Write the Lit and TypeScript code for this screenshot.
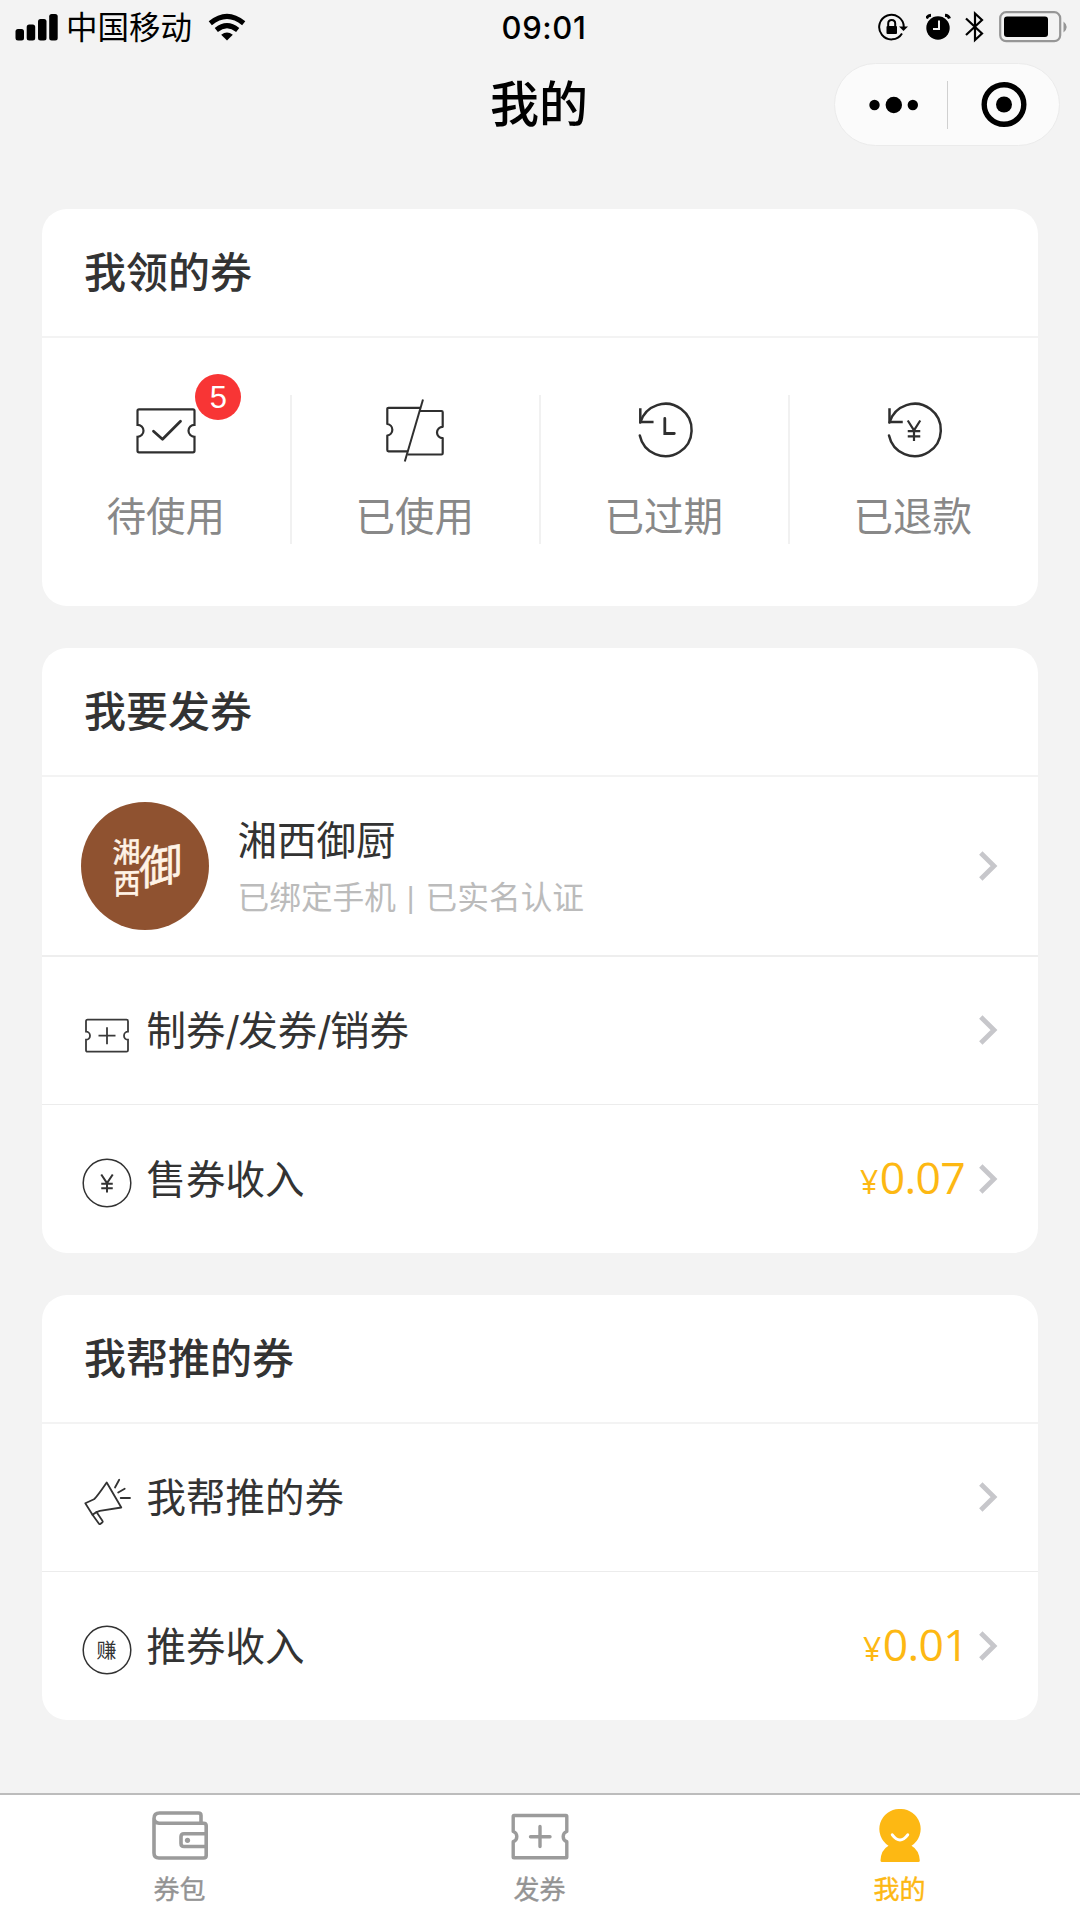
import { LitElement, html, svg, css, nothing, TemplateResult } from "lit";
import { customElement, property } from "lit/decorators.js";

const ticketOutline = (w: number, h: number, n: number) => {
  const m = h / 2;
  return `M3 1.5H${w - 3}Q${w - 1.5} 1.5 ${w - 1.5} 3V${m - n}A${n} ${n} 0 0 0 ${w - 1.5} ${m + n}V${h - 3}Q${w - 1.5} ${h - 1.5} ${w - 3} ${h - 1.5}H3Q1.5 ${h - 1.5} 1.5 ${h - 3}V${m + n}A${n} ${n} 0 0 0 1.5 ${m - n}V3Q1.5 1.5 3 1.5Z`;
};

const yen = (cx: number, top: number, w: number, h: number) =>
  svg`<path d="M${cx - w / 2} ${top}L${cx} ${top + h * 0.48}L${cx + w / 2} ${top}M${cx} ${top + h * 0.48}V${top + h}M${cx - w / 2} ${top + h * 0.52}H${cx + w / 2}M${cx - w / 2} ${top + h * 0.77}H${cx + w / 2}"/>`;

const icons: Record<string, TemplateResult> = {
  unused: html`<svg width="60" height="66" viewBox="0 0 60 66">
    <g transform="translate(0 10.8)" fill="none" stroke="#2f2f2f" stroke-width="2.2">
      <path d=${ticketOutline(60, 46, 6)} />
      <path d="M17.5 23.5L26.5 31.5L44.5 13.5" stroke-width="2.8" stroke-linecap="round" stroke-linejoin="round" />
    </g>
  </svg>`,
  used: html`<svg width="60" height="66" viewBox="0 0 60 66" fill="none" stroke="#2f2f2f" stroke-width="2.2" stroke-linejoin="round">
    <path d="M35.5 10.8H3.5Q2.3 10.8 2.3 12V27A5.8 5.8 0 0 1 2.3 38.5V53Q2.3 54.3 3.5 54.3H22.5" />
    <path d="M35 14H56.5Q57.7 14 57.7 15.2V29.8A5.7 5.7 0 0 0 57.7 41.2V56.3Q57.7 57.5 56.5 57.5H22.5" />
    <path d="M38 2.5L19.8 64.5" stroke-width="2" />
  </svg>`,
  expired: html`<svg width="60" height="66" viewBox="0 0 60 66" fill="none" stroke="#2f2f2f" stroke-width="2.5" stroke-linecap="round">
    <path d="M6.3 25.5A26.2 26.2 0 1 1 5.8 38.5" />
    <path d="M6.3 12.5V25H18.3" stroke-linecap="square" />
    <path d="M30.8 21.5V36.5H40.3" stroke-width="2.8" />
  </svg>`,
  refunded: html`<svg width="60" height="66" viewBox="0 0 60 66" fill="none" stroke="#2f2f2f" stroke-width="2.5" stroke-linecap="round">
    <path d="M6.5 25.5A26.2 26.2 0 1 1 6 38.5" />
    <path d="M6.5 12.5V25H18.5" stroke-linecap="square" />
    <g stroke-width="2.2" stroke-linecap="butt">${yen(31, 23.5, 12.5, 20.5)}</g>
  </svg>`,
  ticket: html`<svg width="50" height="50" viewBox="0 0 50 50" fill="none" stroke="#3a3a3a" stroke-width="1.8">
    <g transform="translate(2.5 8.2)"><path d=${ticketOutline(45, 35, 4)} /><path d="M22.5 9V26M14 17.5H31" /></g>
  </svg>`,
  yen: html`<svg width="50" height="50" viewBox="0 0 50 50" fill="none" stroke="#333" stroke-width="1.5">
    <circle cx="25" cy="25" r="23.8" />
    <g stroke-width="2">${yen(25, 16.5, 11.5, 18)}</g>
  </svg>`,
  horn: html`<svg width="50" height="50" viewBox="0 0 50 50" fill="none" stroke="#333" stroke-width="1.8" stroke-linejoin="round" stroke-linecap="round">
    <path d="M24.7 5.5L39.3 30.5L17.8 33.8Q14 34.8 10.5 37.8L3.3 26.3L12 22.3Q14.8 20 24.7 5.5Z" />
    <path d="M10.5 37.8L16.8 46.5Q17.5 47.5 18.6 46.7L20.2 45.5Q21.2 44.7 20.4 43.7L14.5 35" />
    <path d="M33 10.5L37.2 2.7M36.2 15.5L42.7 11.7M38.7 21H48" />
  </svg>`,
  earn: html`<svg width="50" height="50" viewBox="0 0 50 50">
    <circle cx="25" cy="25" r="23.8" fill="none" stroke="#333" stroke-width="1.5" />
    <text class="glyph" x="24.5" y="32.7" font-size="20" text-anchor="middle" fill="#333">赚</text>
  </svg>`,
  wallet: html`<svg width="60" height="56" viewBox="0 0 60 56" fill="none" stroke="#9b9b9b" stroke-width="3.6" stroke-linejoin="round">
    <path d="M51 15V6.5Q51 4 48.5 4H9.5Q4 4 4 9.5V44Q4 49 9 49H53.5Q56.2 49 56.2 46.5V16.7Q56.2 14.2 53.5 14.2H9Q4.5 14 4 9.5" />
    <path d="M56 24.7H34Q31 24.7 31 27.7V34.5Q31 37.5 34 37.5H56" />
    <circle cx="37.5" cy="31.3" r="2.6" fill="#9b9b9b" stroke="none" />
  </svg>`,
  issue: html`<svg width="60" height="56" viewBox="0 0 60 56" fill="none" stroke="#9b9b9b" stroke-width="3.4" stroke-linejoin="round">
    <path d="M4 6.5H56Q56.8 6.5 56.8 7.5V22.5A5.4 5.4 0 0 0 56.8 32.7V48Q56.8 48.8 56 48.8H4Q3.2 48.8 3.2 48V32.7A5.4 5.4 0 0 0 3.2 22.5V7.5Q3.2 6.5 4 6.5Z" />
    <path d="M30 17.5V37.5M20.5 27.7H40" stroke-linecap="round" />
  </svg>`,
  me: html`<svg width="60" height="56" viewBox="0 0 60 56">
    <path d="M30 0A20 20 0 0 1 41.5 36.8Q49 41 49.8 51.5Q49.8 53 48.3 53H12Q10.5 53 10.5 51.5Q11 41 18.5 36.8A20 20 0 0 1 30 0Z" fill="#fdb813" />
    <path d="M22.3 25.8Q30 36 37.7 25.8" fill="none" stroke="#fff" stroke-width="3" stroke-linecap="round" />
  </svg>`,
};

const base = css`
  * { box-sizing: border-box; }
  svg { display: block; flex: none; }
  .glyph { font-family: "Noto Sans CJK SC", sans-serif; }
`;

@customElement("status-bar")
class StatusBar extends LitElement {
  static styles = [base, css`
    :host { display: grid; grid-template-columns: 1fr auto 1fr; align-items: center; height: 54px; padding: 0 12px 0 15px; color: #000; }
    .left, .right { display: flex; align-items: center; }
    .right { justify-content: flex-end; }
    .carrier { font-size: 31.5px; line-height: 40px; margin: 0 16px 0 8px; padding-top: 1px; }
    .time { font: 500 31px/40px Inter, sans-serif; letter-spacing: 0.6px; margin-left: 5px; padding-top: 1px; }
    .lock { margin-right: 17px; }
    .alarm { margin-right: 13px; }
    .bt { margin-right: 14px; }
  `];
  render() {
    return html`
      <div class="left">
        <svg width="43" height="28" viewBox="0 0 43 28">
          <rect x="0.5" y="16" width="8.5" height="11.5" rx="2.5" /><rect x="11.7" y="11.5" width="8.5" height="16" rx="2.5" />
          <rect x="23" y="6" width="8.5" height="21.5" rx="2.5" /><rect x="34.2" y="1" width="8.5" height="26.5" rx="2.5" />
        </svg>
        <span class="carrier">中国移动</span>
        <svg width="38" height="28" viewBox="0 0 38 28" fill="none" stroke="#000" stroke-width="5">
          <path d="M2.3 10.3Q19 -3.5 35.7 10.3" /><path d="M8.3 17Q19 8.3 29.7 17" />
          <path d="M19 27.5L13.2 21.7Q19 17.3 24.8 21.7Z" fill="#000" stroke="none" />
        </svg>
      </div>
      <div class="time">09:01</div>
      <div class="right">
        <svg class="lock" width="31" height="28" viewBox="0 0 31 28" fill="none" stroke="#000" stroke-width="2">
          <path d="M24 20.5A12.3 12.3 0 1 1 25.8 14" />
          <path d="M21 13.5H30L25.5 18Z" fill="#000" stroke="none" />
          <rect x="8.5" y="13" width="10.5" height="8" rx="1" fill="#000" stroke="none" />
          <path d="M10.2 13.5V10.5Q10.2 7 13.7 7T17.2 10.5V13.5" />
        </svg>
        <svg class="alarm" width="26" height="28" viewBox="0 0 26 28">
          <circle cx="12" cy="15" r="11.7" />
          <path d="M0.5 5.5Q1.5 2.5 5 2.3M23.5 5.5Q22.5 2.5 19 2.3" fill="none" stroke="#000" stroke-width="3" />
          <path d="M13 7.5V16H7" fill="none" stroke="#f3f3f3" stroke-width="2" />
        </svg>
        <svg class="bt" width="20" height="32" viewBox="0 0 20 32" fill="none" stroke="#000" stroke-width="2.2">
          <path d="M1 7.5L17 22.5L10 29V2.5L17 9L1 24" />
        </svg>
        <svg width="69" height="32" viewBox="0 0 69 32">
          <rect x="1.2" y="1.2" width="60" height="29" rx="6" fill="none" stroke="#969696" stroke-width="2.2" />
          <rect x="5" y="5.5" width="44" height="20.5" rx="3" />
          <path d="M64.5 10.5Q67.7 13 67.7 16T64.5 21.5Z" fill="#969696" />
        </svg>
      </div>`;
  }
}

@customElement("nav-header")
class NavHeader extends LitElement {
  static styles = [base, css`
    :host { display: grid; grid-template-columns: 1fr auto 1fr; align-items: center; height: 101px; padding: 0 20px 0 0; }
    .title { grid-column: 2; font-size: 49px; line-height: 60px; font-weight: 500; color: #000; margin-left: 18px; }
    .capsule { justify-self: end; display: flex; align-items: center; width: 226px; height: 83px; border-radius: 42px; background: #fbfbfb; border: 1px solid #ebebeb; }
    .half { flex: 1; display: flex; justify-content: center; align-items: center; }
    .line { width: 1px; height: 48px; background: #d0d0d0; }
  `];
  render() {
    return html`
      <div class="title">我的</div>
      <div class="capsule">
        <div class="half"><svg width="56" height="18" viewBox="0 0 56 18"><circle cx="11.5" cy="9" r="5.2" /><circle cx="30.8" cy="9" r="8.2" /><circle cx="49.8" cy="9" r="5.2" /></svg></div>
        <div class="line"></div>
        <div class="half"><svg width="48" height="46" viewBox="0 0 48 46"><circle cx="25" cy="22.5" r="19.8" fill="none" stroke="#000" stroke-width="5.4" /><circle cx="25" cy="22.5" r="8" /></svg></div>
      </div>`;
  }
}

@customElement("info-card")
class InfoCard extends LitElement {
  @property() heading = "";
  static styles = [base, css`
    :host { display: block; background: #fff; border-radius: 25px; overflow: hidden; }
    .heading { height: 128.5px; padding: 1px 42px 0; display: flex; align-items: center; font-size: 42px; line-height: 60px; font-weight: 500; color: #333; border-bottom: 2px solid #f3f3f3; }
  `];
  render() {
    return html`<div class="heading">${this.heading}</div><slot></slot>`;
  }
}

@customElement("coupon-stat")
class CouponStat extends LitElement {
  @property() icon = "";
  @property() label = "";
  @property({ type: Number }) count = 0;
  static styles = [base, css`
    :host { display: flex; flex-direction: column; align-items: center; height: 149px; gap: 28px; padding-top: 2.5px; border-right: 2px solid #f1f1f1; }
    :host(:last-child) { border-right-color: transparent; }
    .pic { position: relative; }
    .badge { position: absolute; left: 59px; top: -23px; width: 46px; height: 46px; border-radius: 50%; background: #f83535; color: #fff; font: 400 31px/47px "Liberation Sans", sans-serif; text-align: center; }
    .label { font-size: 39.5px; line-height: 50px; color: #888; margin-right: 1px; padding-top: 1px; }
  `];
  render() {
    return html`<div class="pic">${icons[this.icon]}${this.count ? html`<span class="badge">${this.count}</span>` : nothing}</div>
      <div class="label">${this.label}</div>`;
  }
}

const chevron = html`<svg width="20" height="32" viewBox="0 0 20 32"><path d="M1.8 3L15 16L1.8 29" fill="none" stroke="#c7c7cb" stroke-width="4.8" /></svg>`;

@customElement("list-row")
class ListRow extends LitElement {
  @property() icon = "";
  @property() label = "";
  @property() amount = "";
  static styles = [base, css`
    :host { display: flex; align-items: center; height: 148.5px; padding: 0 39px 0 40px; border-bottom: 1.5px solid #ececec; }
    :host(:last-child) { border-bottom: 0; height: 148px; }
    .icon { padding-top: 8.5px; margin-right: 14.5px; }
    .label { flex: 1; font-size: 39.5px; line-height: 50px; color: #333; padding-top: 2px; }
    .slash { letter-spacing: -1.5px; }
    .amount { display: flex; align-items: baseline; font-family: "Open Sans", sans-serif; color: #fdb813; margin-right: 14px; line-height: 50px; padding-top: 1px; }
    .amount.narrow { margin-right: 11px; }
    .sign { font-size: 32px; margin-right: 1.5px; }
    .value { font-size: 44.5px; letter-spacing: -0.7px; }
  `];
  render() {
    const narrow = this.amount.endsWith("1") ? "narrow" : "";
    const parts = this.label.split("/").map((p, i) => (i ? html`<span class="slash">/</span>${p}` : p));
    return html`<div class="icon">${icons[this.icon]}</div><div class="label">${parts}</div>
      ${this.amount ? html`<div class="amount ${narrow}"><span class="sign">¥</span><span class="value">${this.amount}</span></div>` : nothing}${chevron}`;
  }
}

@customElement("merchant-row")
class MerchantRow extends LitElement {
  static styles = [base, css`
    :host { display: flex; align-items: center; height: 180px; padding: 1px 39px 0; border-bottom: 2px solid #eee; }
    .info { flex: 1; margin-left: 28.5px; padding-top: 7px; display: flex; flex-direction: column; gap: 7px; }
    .name { font-size: 39.5px; line-height: 50px; color: #333; }
    .sub { font-size: 31.7px; line-height: 50px; color: #bbb; }
    .bar { font-family: "Liberation Sans", sans-serif; font-size: 30px; vertical-align: 1px; margin: 0 2px; }
  `];
  render() {
    return html`
      <svg width="128" height="128" viewBox="0 0 128 128" fill="#fff3e6" stroke="#fff3e6" stroke-width="0.6">
        <circle cx="64" cy="64" r="64" fill="#8f5230" stroke="none" />
        <text class="glyph" font-size="28" transform="translate(31.5 61) skewY(-3)">湘</text>
        <text class="glyph" font-size="27" transform="translate(32.5 92.5) scale(1 1.08) skewY(-2)">西</text>
        <text class="glyph" font-size="43" transform="translate(58 84) scale(1 1.06) skewY(-9)">御</text>
      </svg>
      <div class="info"><div class="name">湘西御厨</div><div class="sub">已绑定手机 <span class="bar">|</span> 已实名认证</div></div>
      ${chevron}`;
  }
}

@customElement("tab-item")
class TabItem extends LitElement {
  @property() icon = "";
  @property() label = "";
  @property({ type: Boolean, reflect: true }) active = false;
  static styles = [base, css`
    :host { display: flex; flex-direction: column; align-items: center; padding-top: 13.5px; gap: 8px; color: #949494; }
    :host([active]) { color: #fdb813; }
    .label { font-size: 26px; line-height: 34px; margin-right: 1px; -webkit-text-stroke: 0.4px currentColor; }
  `];
  render() {
    return html`${icons[this.icon]}<div class="label">${this.label}</div>`;
  }
}

@customElement("app-root")
class AppRoot extends LitElement {
  static styles = [base, css`
    :host { display: flex; flex-direction: column; width: 1080px; height: 1920px; background: #f3f3f3; overflow: hidden; font-family: Inter, "Noto Sans CJK SC", sans-serif; }
    main { flex: 1; display: flex; flex-direction: column; gap: 42px; padding: 54px 42px 0; }
    .stats { display: grid; grid-template-columns: repeat(4, 249px); height: 268.5px; padding: 57px 0 0 0.8px; align-items: start; }
    nav { display: grid; grid-template-columns: repeat(3, 1fr); height: 127px; background: #fff; border-top: 2px solid #bcbcbc; }
  `];
  render() {
    return html`
      <status-bar></status-bar>
      <nav-header></nav-header>
      <main>
        <info-card heading="我领的券">
          <div class="stats">
            <coupon-stat icon="unused" label="待使用" count="5"></coupon-stat>
            <coupon-stat icon="used" label="已使用"></coupon-stat>
            <coupon-stat icon="expired" label="已过期"></coupon-stat>
            <coupon-stat icon="refunded" label="已退款"></coupon-stat>
          </div>
        </info-card>
        <info-card heading="我要发券">
          <merchant-row></merchant-row>
          <list-row icon="ticket" label="制券/发券/销券"></list-row>
          <list-row icon="yen" label="售券收入" amount="0.07"></list-row>
        </info-card>
        <info-card heading="我帮推的券">
          <list-row icon="horn" label="我帮推的券"></list-row>
          <list-row icon="earn" label="推券收入" amount="0.01"></list-row>
        </info-card>
      </main>
      <nav>
        <tab-item icon="wallet" label="券包"></tab-item>
        <tab-item icon="issue" label="发券"></tab-item>
        <tab-item icon="me" label="我的" active></tab-item>
      </nav>`;
  }
}
